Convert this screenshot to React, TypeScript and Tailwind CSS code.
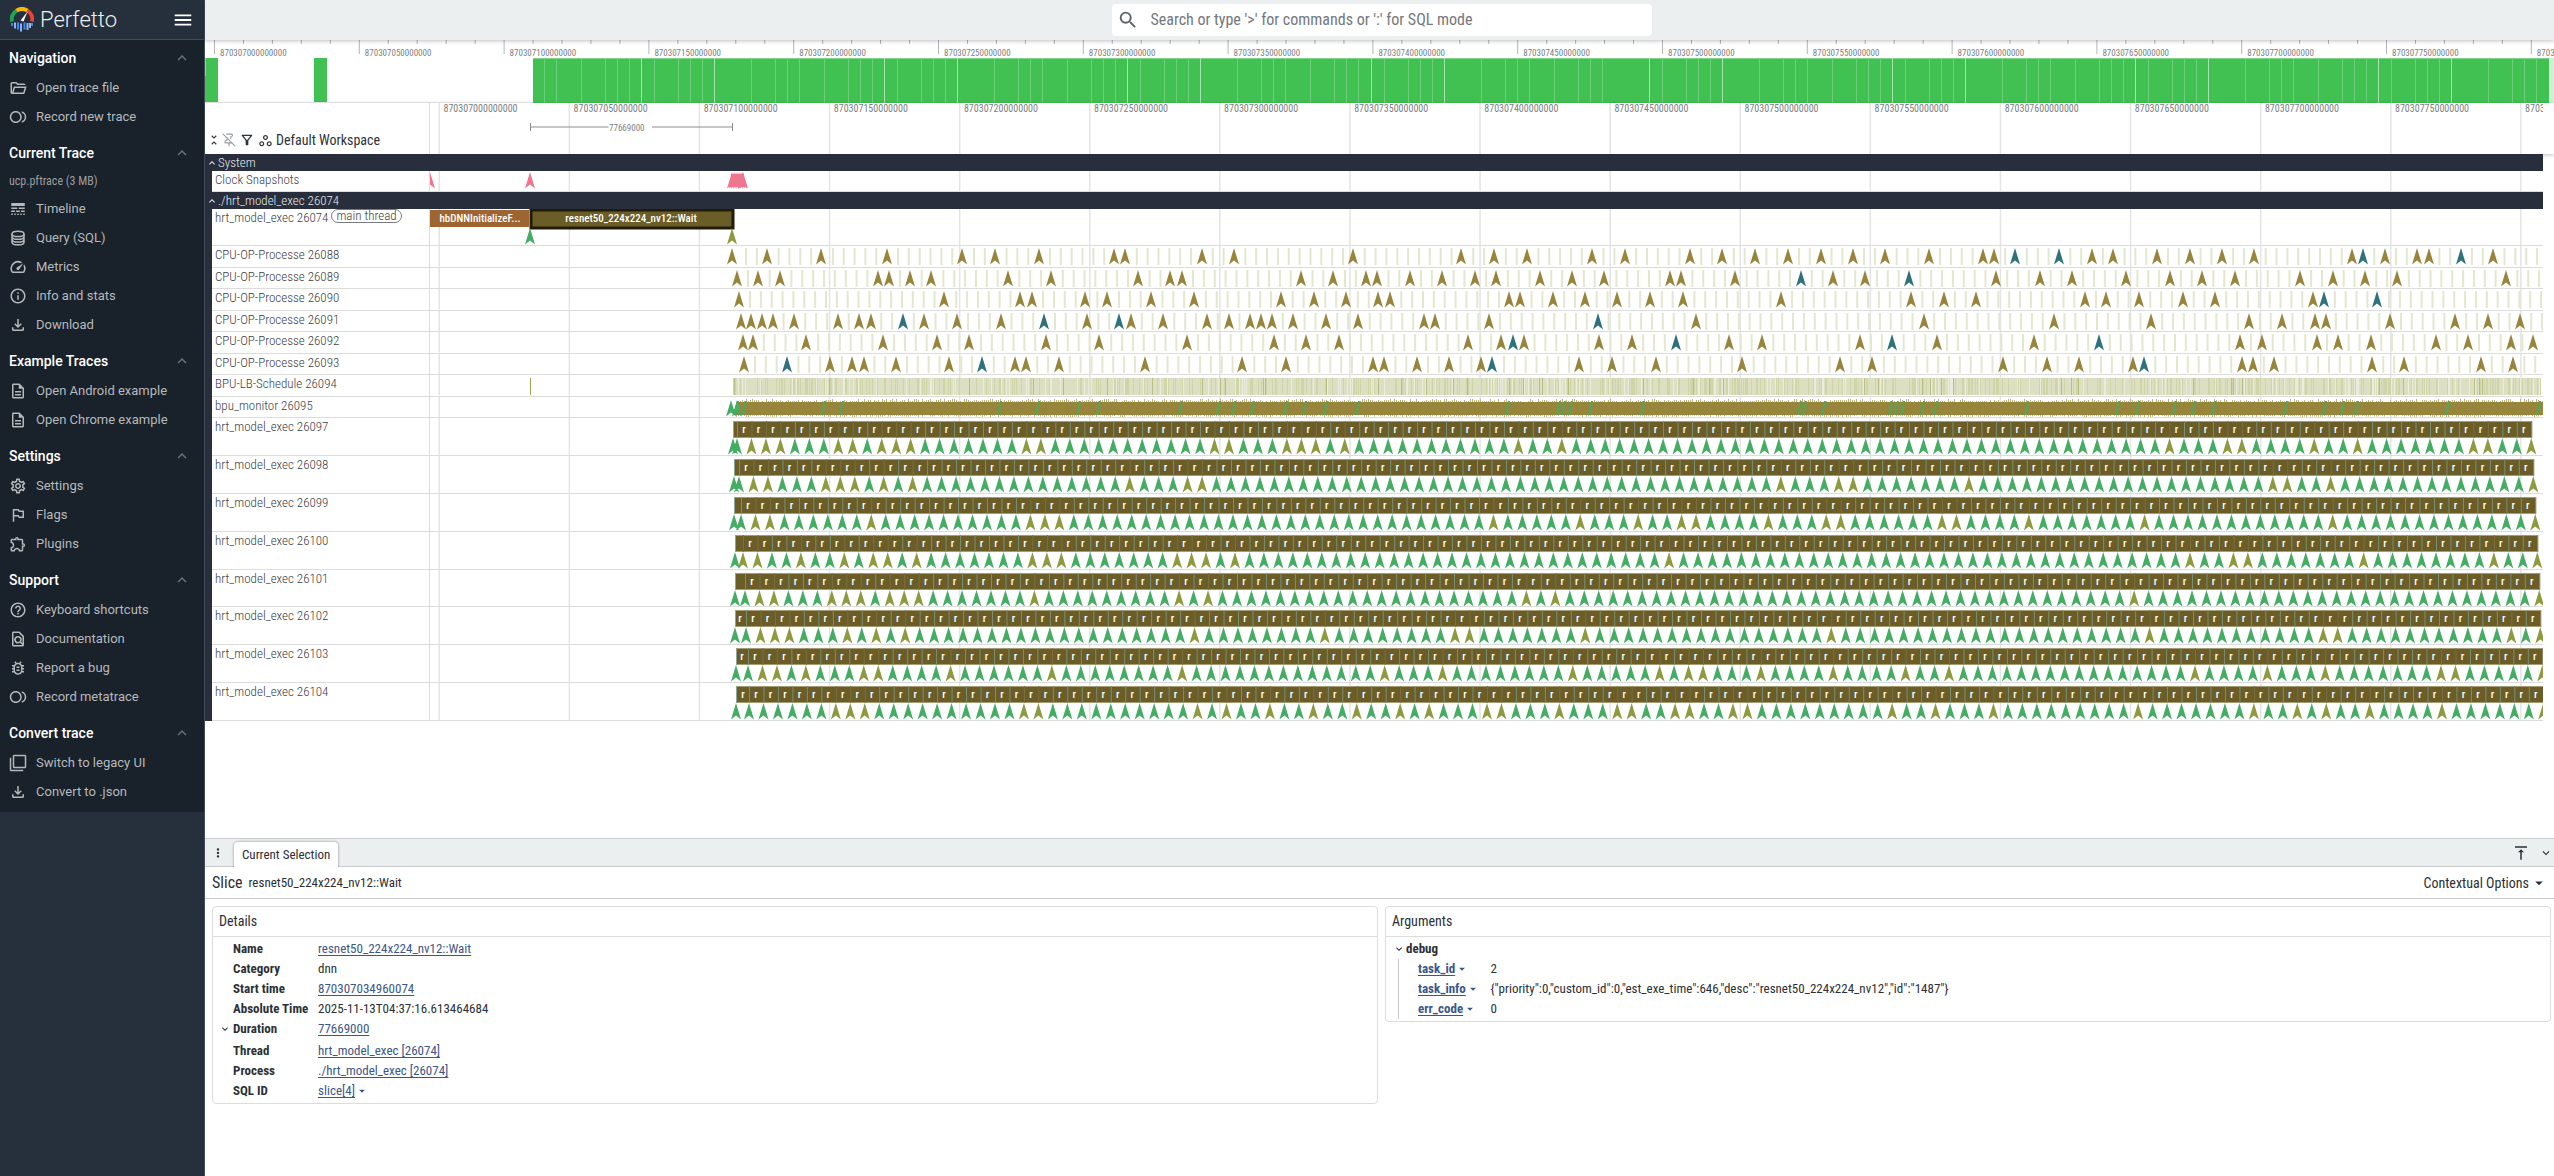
import type { ReactNode } from "react";
import type { IconType } from "react-icons";
import {
  MdArrowDropDown,
  MdFilterNone,
  MdHelpOutline,
  MdInfoOutline,
  MdKeyboardArrowDown,
  MdKeyboardArrowUp,
  MdLineStyle,
  MdMenu,
  MdMoreVert,
  MdOutlineBugReport,
  MdOutlineDescription,
  MdOutlineExtension,
  MdOutlineFiberSmartRecord,
  MdOutlineFileDownload,
  MdOutlineFilterAlt,
  MdOutlineFindInPage,
  MdOutlinedFlag,
  MdOutlineSettings,
  MdOutlineWorkspaces,
  MdSearch,
  MdSpeed,
  MdUnfoldLess,
  MdVerticalAlignTop,
} from "react-icons/md";
import { PinOff } from "lucide-react";

const DatabaseIcon = () => (
  <svg viewBox="0 0 24 24" className="size-[18px]" fill="none" stroke="currentColor" strokeWidth="2">
    <ellipse cx="12" cy="6.5" rx="8" ry="3.5" />
    <path d="M4 6.5v11c0 2 3.6 3.5 8 3.5s8-1.5 8-3.5v-11M4 10.2c0 2 3.6 3.5 8 3.5s8-1.5 8-3.5M4 13.9c0 2 3.6 3.5 8 3.5s8-1.5 8-3.5" />
  </svg>
);

const FolderIcon = () => (
  <svg viewBox="0 -960 960 960" className="size-[18px]" fill="currentColor">
    <path d="M160-160q-33 0-56.5-23.5T80-240v-480q0-33 23.5-56.5T160-800h240l80 80h320q33 0 56.5 23.5T880-640H447l-80-80H160v480l96-320h684L837-217q-8 26-29.5 41.5T760-160H160Zm84-80h516l72-240H316l-72 240Z" />
  </svg>
);

const sections: {
  title: string;
  note?: string;
  items: { label: string; icon: IconType | typeof DatabaseIcon }[];
}[] = [
  {
    title: "Navigation",
    items: [
      { label: "Open trace file", icon: FolderIcon },
      { label: "Record new trace", icon: MdOutlineFiberSmartRecord },
    ],
  },
  {
    title: "Current Trace",
    note: "ucp.pftrace (3 MB)",
    items: [
      { label: "Timeline", icon: MdLineStyle },
      { label: "Query (SQL)", icon: DatabaseIcon },
      { label: "Metrics", icon: MdSpeed },
      { label: "Info and stats", icon: MdInfoOutline },
      { label: "Download", icon: MdOutlineFileDownload },
    ],
  },
  {
    title: "Example Traces",
    items: [
      { label: "Open Android example", icon: MdOutlineDescription },
      { label: "Open Chrome example", icon: MdOutlineDescription },
    ],
  },
  {
    title: "Settings",
    items: [
      { label: "Settings", icon: MdOutlineSettings },
      { label: "Flags", icon: MdOutlinedFlag },
      { label: "Plugins", icon: MdOutlineExtension },
    ],
  },
  {
    title: "Support",
    items: [
      { label: "Keyboard shortcuts", icon: MdHelpOutline },
      { label: "Documentation", icon: MdOutlineFindInPage },
      { label: "Report a bug", icon: MdOutlineBugReport },
      { label: "Record metatrace", icon: MdOutlineFiberSmartRecord },
    ],
  },
  {
    title: "Convert trace",
    items: [
      { label: "Switch to legacy UI", icon: MdFilterNone },
      { label: "Convert to .json", icon: MdOutlineFileDownload },
    ],
  },
];

// Track canvas starts here, event positions below are window x values
const TRACK_X = 430;

const cpuTracks = [
  {
    name: "CPU-OP-Processe 26088",
    first: 746,
    brown: [732, 767, 821, 887, 962, 995, 1039, 1114, 1125, 1202, 1234, 1353, 1461, 1494, 1527, 1592, 1625, 1690, 1722, 1755, 1788, 1821, 1853, 1885, 1929, 1983, 1994, 2092, 2113, 2157, 2190, 2222, 2254, 2352, 2385, 2417, 2429, 2493],
    teal: [2015, 2059, 2363, 2461],
  },
  {
    name: "CPU-OP-Processe 26089",
    first: 748,
    brown: [737, 758, 780, 878, 889, 910, 931, 1008, 1051, 1138, 1170, 1182, 1301, 1333, 1366, 1377, 1410, 1442, 1475, 1496, 1540, 1572, 1604, 1670, 1681, 1735, 1833, 1865, 1996, 2040, 2072, 2126, 2170, 2202, 2235, 2300, 2333, 2365, 2397, 2506],
    teal: [1801, 1909],
  },
  {
    name: "CPU-OP-Processe 26090",
    first: 750,
    brown: [739, 944, 1020, 1032, 1085, 1107, 1151, 1194, 1281, 1314, 1346, 1378, 1390, 1509, 1520, 1553, 1585, 1617, 1650, 1683, 1781, 1911, 1944, 1976, 2085, 2106, 2139, 2183, 2215, 2313],
    teal: [2324, 2377],
  },
  {
    name: "CPU-OP-Processe 26091",
    first: 751,
    brown: [741, 751, 762, 773, 794, 838, 859, 871, 924, 957, 1001, 1087, 1131, 1163, 1207, 1229, 1250, 1261, 1272, 1293, 1326, 1358, 1424, 1435, 1489, 1696, 1924, 2054, 2151, 2249, 2282, 2315, 2326, 2390, 2455, 2488, 2520],
    teal: [903, 1044, 1119, 1598],
  },
  {
    name: "CPU-OP-Processe 26092",
    first: 753,
    brown: [743, 753, 806, 883, 937, 969, 1046, 1099, 1187, 1274, 1306, 1339, 1468, 1501, 1524, 1599, 1632, 1729, 1762, 1860, 1937, 2034, 2240, 2262, 2317, 2338, 2371, 2436, 2468, 2511, 2533],
    teal: [1513, 1676, 1892, 2099],
  },
  {
    name: "CPU-OP-Processe 26093",
    first: 755,
    brown: [744, 830, 852, 864, 896, 949, 1015, 1026, 1059, 1145, 1242, 1286, 1373, 1384, 1417, 1449, 1481, 1579, 1612, 1656, 1742, 1840, 1872, 2003, 2047, 2079, 2133, 2242, 2253, 2274, 2372, 2404, 2481, 2513],
    teal: [787, 982, 1492, 2144],
  },
];

// olive: indexes of the tasks whose flow marker is olive instead of green
const execTracks = [
  { name: "hrt_model_exec 26097", first: 737, olive: [1, 2, 3, 7, 8, 10, 11, 12, 20, 21, 33, 34, 38, 39, 40, 42, 54, 57, 99, 103, 104, 109, 112, 120, 121, 124] },
  { name: "hrt_model_exec 26098", first: 739, olive: [1, 2, 6, 7, 8, 10, 12, 27, 31, 32, 72, 76, 77, 85, 106, 107, 110, 124] },
  { name: "hrt_model_exec 26099", first: 741, olive: [1, 2, 9, 20, 21, 22, 52, 58, 62, 65, 66, 71, 75, 76, 83, 84, 89, 97, 110, 124] },
  { name: "hrt_model_exec 26100", first: 743, olive: [0, 1, 4, 7, 9, 10, 12, 20, 21, 22, 30, 31, 32, 34, 64, 100, 103, 104, 112, 121, 124] },
  { name: "hrt_model_exec 26101", first: 745, olive: [1, 2, 6, 7, 8, 10, 11, 12, 20, 30, 32, 54, 56, 96, 124] },
  { name: "hrt_model_exec 26102", first: 746, olive: [1, 2, 3, 7, 9, 11, 31, 40, 49, 50, 58, 75, 97, 109, 110, 122, 124] },
  { name: "hrt_model_exec 26103", first: 748, olive: [1, 2, 4, 8, 9, 14, 21, 30, 44, 48, 57, 63, 65, 66, 70, 75, 80, 83, 100, 105, 109, 117, 118, 124] },
  { name: "hrt_model_exec 26104", first: 749, olive: [6, 7, 8, 19, 20, 31, 33, 36, 39, 42, 45, 47, 51, 52, 56, 60, 61, 64, 65, 68, 69, 79, 82, 86, 96, 104, 107, 109, 112, 117, 124] },
];

const monitorMarks = [
  738, 746, 825, 843, 1001, 1039, 1080, 1100, 1182, 1220, 1235, 1254, 1287, 1306, 1327, 1359, 1509, 1560, 1565, 1572, 1592, 1644, 1801, 1806, 1825, 1892, 1898, 1904, 1924, 1937, 2028, 2119, 2139, 2176, 2195, 2215, 2287, 2326, 2344, 2358, 2449, 2540,
];

const range = (n: number) => Array.from({ length: n }, (_, i) => i);

// Cheap repeatable noise in 0..1
const noise = (i: number) => {
  const v = Math.sin(i * 12.9898) * 43758.5453;
  return v - Math.floor(v);
};

const arrows = (xs: number[], top: number) =>
  xs.map((x) => `M${x - TRACK_X} ${top}l5 16.5l-5 -4l-5 4z`).join("");

const bars = (xs: number[], top: number, height: number, width = 1) =>
  xs.map((x) => `M${x - TRACK_X} ${top}h${width}v${height}h${-width}z`).join("");

function Canvas({ children }: { children?: ReactNode }) {
  return (
    <svg className="block h-full w-full overflow-hidden" aria-hidden="true">
      {range(17).map((i) => (
        <rect key={i} x={8.5 + i * 130.1} y="0" width="1.5" height="100%" fill="#e4e4e6" />
      ))}
      {children}
    </svg>
  );
}

function Track({ name, chip, children }: { name: string; chip?: string; children?: ReactNode }) {
  return (
    <div className="flex min-h-0 overflow-hidden">
      <div className="w-[7px] shrink-0 bg-[#282e3c]" />
      <div className="flex w-[218px] shrink-0 items-start gap-[3px] border-r border-b border-[#dcdcdc] pl-[3px] text-[13px] leading-[17px] font-light whitespace-nowrap text-[#3c4046]">
        {name}
        {chip && (
          <span className="h-[14px] rounded-full border border-[#777b80] px-1 leading-3">{chip}</span>
        )}
      </div>
      <div className="min-w-0 flex-1 border-b border-[#dcdcdc]">
        <Canvas>{children}</Canvas>
      </div>
    </div>
  );
}

function GroupHeader({ title }: { title: string }) {
  return (
    <button className="flex h-[17px] w-full items-center bg-[#282e3c] pl-px text-[13px] leading-4 font-light text-[#e6e8ec]">
      <MdKeyboardArrowUp className="size-3" />
      {title}
    </button>
  );
}

function CpuTrack({ name, first, brown, teal }: (typeof cpuTracks)[number]) {
  const taken = [...brown, ...teal];
  const ticks = range(166)
    .map((i) => first + i * 10.855)
    .filter((x) => x < 2543 && !taken.some((t) => Math.abs(t - x) < 5));
  return (
    <Track name={name}>
      <path d={bars(ticks.map((x) => x - 1), 2, 17, 2)} fill="#e4e7cf" />
      <path d={arrows(brown, 2)} fill="#98853c" />
      <path d={arrows(teal, 2)} fill="#2f727b" />
    </Track>
  );
}

function ExecTrack({ name, first, olive }: (typeof execTracks)[number]) {
  const starts = range(125).map((i) => first + i * 14.47);
  const start = 733 + Math.round((first - 737) / 4);
  const end = starts[124];
  const green = starts.filter((_, i) => !olive.includes(i));
  const rest = starts.filter((_, i) => olive.includes(i));
  // The leading slice only has room for its label on the later threads
  const labels = starts.slice(0, 124).map((x) => x + 7);
  if (first > 745) labels.unshift(first - 6);
  return (
    <Track name={name}>
      <rect x={start - TRACK_X} y="3" width={end - start} height="17" fill="#a89c74" />
      <rect x={start - TRACK_X} y="4" width={end - start} height="15" fill="#6a5d27" />
      <path d={bars(rest, 3, 17)} fill="#7c6f3f" />
      <path d={bars(green, 3, 17)} fill="#7b8f74" />
      <rect x={start - TRACK_X} y="3" width="1" height="17" fill="#8fa79a" />
      <path d={arrows(rest, 20)} fill="#8d9a3f" />
      <path d={arrows([start, ...green], 20)} fill="#44ad63" />
      <g fill="#fff" fontSize="11" fontWeight="500" textAnchor="middle">
        {labels.map((x) => (
          <text key={x} x={x - TRACK_X} y="15">
            r
          </text>
        ))}
      </g>
    </Track>
  );
}

function ScheduleTrack() {
  const px = range(1808);
  return (
    <Track name="BPU-LB-Schedule 26094">
      <rect x={530 - TRACK_X} y="3" width="1" height="17" fill="#a2a45a" />
      <rect x={733 - TRACK_X} y="3" width="1808" height="17" fill="#dcdfc1" />
      <path d={bars(px.filter((i) => noise(i) < 0.3).map((i) => i + 733), 3, 17)} fill="#cfd4a9" />
      <path d={bars(px.filter((i) => noise(i + 0.5) < 0.1).map((i) => i + 733), 3, 17)} fill="#ebecdc" />
      <path d={bars(px.filter((i) => noise(i + 0.3) < 0.02).map((i) => i + 733), 3, 17)} fill="#b9be84" />
    </Track>
  );
}

function MonitorTrack() {
  const px = range(904).map((i) => i * 2);
  return (
    <Track name="bpu_monitor 26095">
      <path
        d={px
          .map((i) => {
            const rise = Math.round(noise(i) * 3);
            return `M${i + 736 - TRACK_X} ${5 - rise}h1v${13 + rise + noise(i + 1) * 2}h-1z`;
          })
          .join("")}
        fill="#bfb47f"
      />
      <rect x={736 - TRACK_X} y="5" width="1807" height="13" fill="#98853c" />
      <path d={monitorMarks.map((x) => `M${x + 1 - TRACK_X} 4l-3 14h-2l3 -14z`).join("")} fill="#4fa75c" />
      <path d={arrows([731, 737], 3)} fill="#44ad63" />
    </Track>
  );
}

function Overview() {
  // Bright seams between load buckets repeat in a fixed rhythm
  const rhythm = [0, 13, 37, 49, 61, 73, 110, 134, 146, 158, 183, 207, 219, 231];
  const groups = [398, 641, 884, 1127, 1371, 1649, 1892, 2135, 2378];
  const seams = groups.flatMap((g, gi) =>
    rhythm
      .map((r) => ({ x: g + r, strong: r === 0 || r === 73 }))
      .filter(({ x }) => x > 540 && x < (groups[gi + 1] ?? 2549)),
  );
  return (
    <svg className="block h-[63px] w-full shrink-0" aria-hidden="true">
      {range(82).map((i) => (
        <rect key={i} x={9 + i * 28.96} y="0" width="1" height={i % 5 === 0 ? 14 : 4} fill="#b4b6b8" />
      ))}
      <g fill="#7c7f83" fontSize="9">
        {range(17).map((i) => (
          <text key={i} x={15 + i * 144.8} y="16">
            {870307000000000 + i * 50000000}
          </text>
        ))}
      </g>
      <rect x="0" y="18" width="13" height="45" fill="#41c152" />
      <rect x="109" y="18" width="13" height="45" fill="#41c152" />
      <rect x="328" y="18" width="2016" height="45" fill="#41c152" />
      <rect x="328" y="18" width="2016" height="1" fill="#7fd68a" />
      <rect x="2344" y="18" width="100" height="45" fill="#d0f0d4" />
      <rect x="0" y="18" width="1" height="18" fill="#b9bcbe" />
      {seams.map(({ x, strong }) => (
        <rect key={x} x={x - 205} y="18" width="1" height="45" fill={strong ? "#a6e3ae" : "#6dd07a"} />
      ))}
      <rect x="0" y="62" width="328" height="1" fill="#ececec" />
    </svg>
  );
}

function TimeAxis() {
  return (
    <div className="flex h-[51px] shrink-0 pr-[11px] shadow-[0_1px_4px_rgba(0,0,0,0.25)]">
      <div className="flex w-[225px] shrink-0 items-end border-r border-[#dcdcdc] pb-1 pl-[2px] text-[#2e3338]">
        <button aria-label="Collapse all" className="flex h-5 w-[15px] items-center">
          <MdUnfoldLess className="size-[14px]" />
        </button>
        <button aria-label="Clear pinned tracks" className="flex h-5 w-[17px] items-center text-[#9b9ea1]">
          <PinOff className="size-[14px]" />
        </button>
        <button aria-label="Filter tracks" className="flex h-5 w-[19px] items-center">
          <MdOutlineFilterAlt className="size-4" />
        </button>
        <button className="flex h-5 items-center gap-[3px] text-sm">
          <MdOutlineWorkspaces className="size-[15px]" />
          Default Workspace
        </button>
      </div>
      <div className="min-w-0 flex-1">
        <Canvas>
          <g fill="#7c7f83" fontSize="10">
            {range(17).map((i) => (
              <text key={i} x={13.5 + i * 130.1} y="9">
                {870307000000000 + i * 50000000}
              </text>
            ))}
          </g>
          <path d="M100.5 20v8M302.5 20v8M100.5 24h78M222 24h80" stroke="#8a8d90" fill="none" />
          <text x="179" y="28" fill="#7c7f83" fontSize="9">
            77669000
          </text>
        </Canvas>
      </div>
    </div>
  );
}

function Logo() {
  return (
    <svg viewBox="0 0 24 26" className="h-[26px] w-6" fill="none" aria-hidden="true">
      <path d="M2 14.5A10 10 0 0 1 6.5 3.7" stroke="#1fa653" strokeWidth="4" />
      <path d="M6.5 3.7A10 10 0 0 1 17.5 3.7" stroke="#fbb705" strokeWidth="4" />
      <path d="M17.5 3.7A10 10 0 0 1 22 14.5" stroke="#ea4335" strokeWidth="4" />
      <path d="M17.5 4.5L13.5 14.5L10.5 13.5z" fill="#fff" />
      <path d="M2 16v3M8 15.500v7M14.500 15.500v7M22 16v3" stroke="#4285f4" strokeWidth="2" />
      <path d="M5 15.500v6M11 16.500v8M17.500 16v7M20 16v5" stroke="#8ab4f8" strokeWidth="2" />
    </svg>
  );
}

function Sidebar() {
  return (
    <aside className="flex w-[205px] shrink-0 flex-col border-r border-[#414c5a] bg-[#262f3c] font-[Roboto,sans-serif]">
      <header className="flex h-10 items-center border-b border-[#414c5a] pr-[10px] pl-[10px] text-white">
        <Logo />
        <span className="ml-[6px] text-[22px] font-light text-[#eceff1]">Perfetto</span>
        <button aria-label="Toggle sidebar" className="ml-auto">
          <MdMenu className="size-[22px]" />
        </button>
      </header>
      <nav className="bg-[#19212a] pt-[2px]">
        {sections.map((s) => (
          <section key={s.title} className="pb-[6px]">
            <h2>
              <button className="flex h-[31px] w-full items-center justify-between pr-[13px] pl-[9px] text-sm font-medium text-white">
                {s.title}
                <MdKeyboardArrowUp className="size-[18px] text-[#6c7279]" />
              </button>
            </h2>
            {s.note && (
              <p className="px-[9px] font-['Roboto_Condensed',sans-serif] text-xs leading-[26px] text-[#9a9da1]">
                {s.note}
              </p>
            )}
            <ul>
              {s.items.map(({ label, icon: Icon }) => (
                <li key={label}>
                  <a href="#" className="flex h-[29px] items-center gap-[9px] pl-[9px] text-[13px] text-[#b6b9bc]">
                    <Icon className="size-[18px]" />
                    {label}
                  </a>
                </li>
              ))}
            </ul>
          </section>
        ))}
      </nav>
    </aside>
  );
}

const Link = ({ children }: { children: ReactNode }) => (
  <a href="#" className="text-[#3d5688] underline underline-offset-2">
    {children}
  </a>
);

const MenuLink = ({ children }: { children: ReactNode }) => (
  <span className="inline-flex items-center text-[#3d5688]">
    <Link>{children}</Link>
    <MdArrowDropDown className="size-[14px]" />
  </span>
);

const details: { name: string; value: ReactNode; open?: boolean }[] = [
  { name: "Name", value: <Link>resnet50_224x224_nv12::Wait</Link> },
  { name: "Category", value: "dnn" },
  { name: "Start time", value: <Link>870307034960074</Link> },
  { name: "Absolute Time", value: "2025-11-13T04:37:16.613464684" },
  { name: "Duration", value: <Link>77669000</Link>, open: true },
  { name: "Thread", value: <Link>hrt_model_exec [26074]</Link> },
  { name: "Process", value: <Link>./hrt_model_exec [26074]</Link> },
  { name: "SQL ID", value: <MenuLink>slice[4]</MenuLink> },
];

const args = [
  { name: "task_id", value: "2" },
  {
    name: "task_info",
    value: '{"priority":0,"custom_id":0,"est_exe_time":646,"desc":"resnet50_224x224_nv12","id":"1487"}',
  },
  { name: "err_code", value: "0" },
];

function Card({ title, children }: { title: string; children: ReactNode }) {
  return (
    <section className="min-w-0 flex-1 rounded-sm border border-[#dcdcdc]">
      <h3 className="border-b border-[#dcdcdc] px-[6px] text-sm leading-[29px]">{title}</h3>
      {children}
    </section>
  );
}

function DetailsDrawer() {
  return (
    <div className="h-[338px] shrink-0 border-t border-[#c8cacb] text-[#2c3034]">
      <div className="flex h-7 items-end border-b border-[#c8cacb] bg-[#ebeff0]">
        <button aria-label="Tabs menu" className="flex h-full w-[29px] items-center justify-center pr-1">
          <MdMoreVert className="size-[14px]" />
        </button>
        <button className="-mb-px h-[25px] rounded-t-sm bg-white px-2 text-[13px] shadow-[0_0_2px_1px_rgba(0,0,0,0.2)] [clip-path:inset(-3px_-3px_0)]">
          Current Selection
        </button>
        <div className="ml-auto flex h-full items-center gap-[9px] pr-px">
          <button aria-label="Maximize">
            <MdVerticalAlignTop className="size-[18px]" />
          </button>
          <button aria-label="Collapse">
            <MdKeyboardArrowDown className="size-[14px]" />
          </button>
        </div>
      </div>
      <div className="flex h-[32px] items-center border-b border-[#c8cacb] pr-[6px] pl-[7px]">
        <h2 className="text-base">Slice</h2>
        <span className="ml-[6px] text-[13px]">resnet50_224x224_nv12::Wait</span>
        <button className="ml-auto flex items-center gap-px text-sm">
          Contextual Options
          <MdArrowDropDown className="size-[18px]" />
        </button>
      </div>
      <div className="flex items-start gap-[7px] py-[7px] pr-[3px] pl-[7px]">
        <Card title="Details">
          <table className="mt-[2px] mb-[2px] text-[13px] leading-5">
            <tbody>
              {details.map((d) => (
                <tr key={d.name}>
                  <th scope="row" className={d.open ? "pb-[2px] text-left font-bold" : "text-left font-bold"}>
                    <span className="flex w-[105px] items-center whitespace-nowrap">
                      <span className="flex w-5 justify-end pr-[2px]">
                        {d.open && <MdKeyboardArrowDown className="size-3" />}
                      </span>
                      {d.name}
                    </span>
                  </th>
                  <td className={d.open ? "pb-[2px]" : ""}>{d.value}</td>
                </tr>
              ))}
            </tbody>
          </table>
        </Card>
        <Card title="Arguments">
          <div className="mt-[2px] mb-[2px] pl-[7px] text-[13px] leading-5">
            <button className="flex items-center gap-px font-bold">
              <MdKeyboardArrowDown className="size-3" />
              debug
            </button>
            <table className="ml-[5px] border-l border-[#c8cacb]">
              <tbody>
                {args.map((a) => (
                  <tr key={a.name}>
                    <th scope="row" className="w-[92px] pl-[19px] text-left font-bold">
                      <MenuLink>{a.name}</MenuLink>
                    </th>
                    <td>{a.value}</td>
                  </tr>
                ))}
              </tbody>
            </table>
          </div>
        </Card>
      </div>
    </div>
  );
}

export default function App() {
  return (
    <div className="flex h-screen bg-white font-['Roboto_Condensed',sans-serif]">
      <Sidebar />
      <main className="flex min-w-0 flex-1 flex-col">
        <div className="z-10 flex h-10 shrink-0 items-center justify-center bg-[#ebeff0] pl-1 shadow-[0_1px_4px_rgba(0,0,0,0.25)]">
          <label className="flex h-8 w-[540px] items-center rounded-sm bg-white px-[5px]">
            <MdSearch className="size-[22px] text-[#5f6368]" />
            <input
              type="text"
              aria-label="Search"
              placeholder="Search or type '>' for commands or ':' for SQL mode"
              className="ml-3 min-w-0 flex-1 bg-transparent text-base outline-none placeholder:text-[#75787c]"
            />
          </label>
        </div>
        <Overview />
        <TimeAxis />
        <div className="z-10 min-h-0 flex-1 overflow-hidden pr-[11px]">
          <GroupHeader title="System" />
          <div className="grid h-[21px]">
            <Track name="Clock Snapshots">
              <path d={arrows([430, 530, 732, 734, 736, 738, 740, 742, 743], 1)} fill="#f0758f" />
              <rect x="301" y="3" width="13" height="13" fill="#f0758f" />
            </Track>
          </div>
          <GroupHeader title="./hrt_model_exec 26074" />
          <div className="grid h-[37px]">
            <Track name="hrt_model_exec 26074" chip="main thread">
              <rect x="0" y="1" width="99" height="17" fill="#9d6531" />
              <rect x="101" y="1" width="202" height="18" fill="#6a5d27" stroke="#211c05" strokeWidth="3" />
              <g fill="#fff" fontSize="11" fontWeight="500" textAnchor="middle">
                <text x="50" y="13">hbDNNInitializeF...</text>
                <text x="201" y="13">resnet50_224x224_nv12::Wait</text>
              </g>
              <path d={arrows([530], 19)} fill="#44ad63" />
              <path d={arrows([732], 19)} fill="#8d9a3f" />
            </Track>
          </div>
          <div className="grid h-[172px] auto-rows-fr">
            {cpuTracks.map((t) => (
              <CpuTrack key={t.name} {...t} />
            ))}
            <ScheduleTrack />
            <MonitorTrack />
          </div>
          <div className="grid h-[303px] auto-rows-fr">
            {execTracks.map((t) => (
              <ExecTrack key={t.name} {...t} />
            ))}
          </div>
        </div>
        <DetailsDrawer />
      </main>
    </div>
  );
}
